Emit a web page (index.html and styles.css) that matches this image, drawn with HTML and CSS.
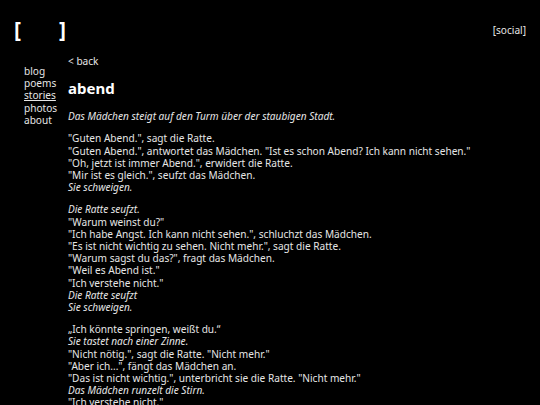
FILE: index.html
```html
<!DOCTYPE html>
<html lang="de">
<head>
<meta charset="utf-8">
<title>abend</title>
<link rel="stylesheet" href="styles.css">
</head>
<body>
<header class="top">
  <a class="logo" href="#">[<span class="logo-gap"></span>]</a>
  <a class="social" href="#">[social]</a>
</header>
<div class="layout">
  <nav class="nav">
    <a href="#">blog</a>
    <a href="#">poems</a>
    <a href="#" class="current">stories</a>
    <a href="#">photos</a>
    <a href="#">about</a>
  </nav>
  <main class="main">
    <a class="back" href="#">&lt; back</a>
    <h1 class="title">abend</h1>
    <p><em>Das Mädchen steigt auf den Turm über der staubigen Stadt.</em></p>
    <p>"Guten Abend.", sagt die Ratte.<br>
    "Guten Abend.", antwortet das Mädchen. "Ist es schon Abend? Ich kann nicht sehen."<br>
    "Oh, jetzt ist immer Abend.", erwidert die Ratte.<br>
    "Mir ist es gleich.", seufzt das Mädchen.<br>
    <em>Sie schweigen.</em></p>
    <p><em>Die Ratte seufzt.</em><br>
    "Warum weinst du?"<br>
    "Ich habe Angst. Ich kann nicht sehen.", schluchzt das Mädchen.<br>
    "Es ist nicht wichtig zu sehen. Nicht mehr.", sagt die Ratte.<br>
    "Warum sagst du das?", fragt das Mädchen.<br>
    "Weil es Abend ist."<br>
    "Ich verstehe nicht."<br>
    <em>Die Ratte seufzt</em><br>
    <em>Sie schweigen.</em></p>
    <p>„Ich könnte springen, weißt du.“<br>
    <em>Sie tastet nach einer Zinne.</em><br>
    "Nicht nötig.", sagt die Ratte. "Nicht mehr."<br>
    "Aber ich...", fängt das Mädchen an.<br>
    "Das ist nicht wichtig.", unterbricht sie die Ratte. "Nicht mehr."<br>
    <em>Das Mädchen runzelt die Stirn.</em><br>
    "Ich verstehe nicht."</p>
  </main>
</div>
</body>
</html>
```
FILE: styles.css
```css
html, body {
  margin: 0;
  padding: 0;
  background: #000;
  color: #e6e6e6;
  font-family: "Noto Sans", "Open Sans", sans-serif;
  font-size: 10.1px;
  line-height: 12.2px;
}
a {
  color: #e6e6e6;
  text-decoration: none;
}
.top {
  display: flex;
  justify-content: space-between;
  align-items: flex-start;
  padding: 16px 14px 0 14px;
}
.logo {
  font-size: 21px;
  font-weight: bold;
  line-height: 26px;
  color: #fff;
  display: flex;
}
.logo-gap {
  display: inline-block;
  width: 38px;
}
.social {
  margin-top: 8px;
}
.layout {
  display: flex;
  padding-left: 24px;
  margin-top: 14px;
}
.nav {
  display: flex;
  flex-direction: column;
  width: 44px;
  padding-top: 9px;
}
.nav .current {
  text-decoration: underline;
}
.main {
  display: flex;
  flex-direction: column;
  align-items: flex-start;
}
.back {
  margin-top: -1px;
}
.title {
  font-size: 15px;
  line-height: 20px;
  font-weight: bold;
  margin: 11px 0 12px;
  color: #fff;
}
p {
  margin: 0 0 10px;
}
```
